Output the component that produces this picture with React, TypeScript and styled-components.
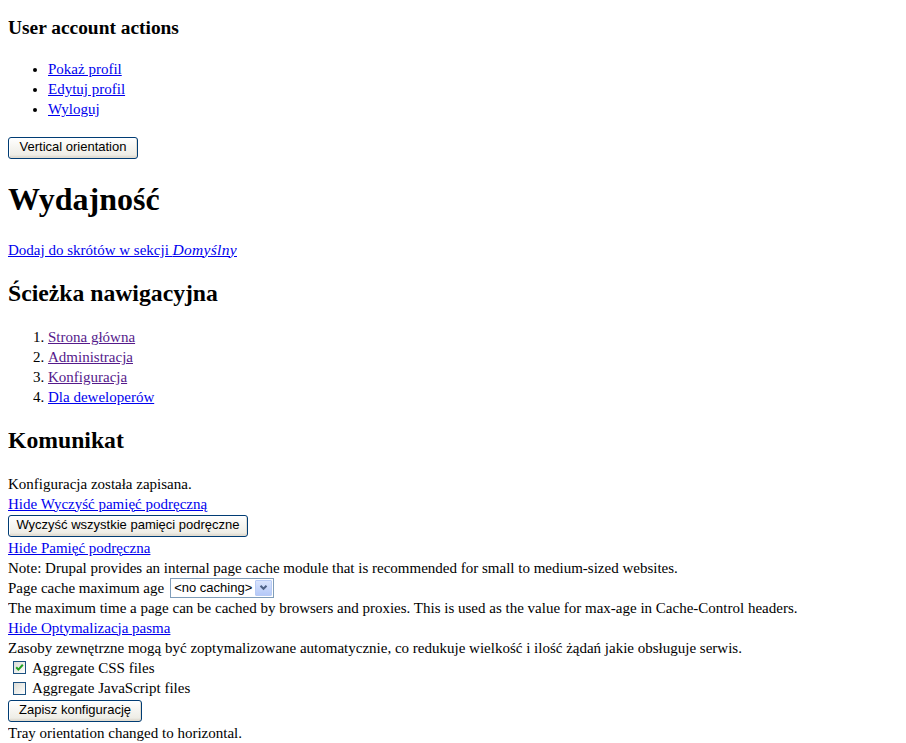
import React from "react";
import styled, { createGlobalStyle } from "styled-components";

const GlobalStyle = createGlobalStyle`
  html, body {
    background: #ffffff;
  }
  body {
    margin: 8px;
    font-family: "Liberation Serif", "Times New Roman", serif;
    font-size: 15px;
    color: #000000;
  }
`;

const H3 = styled.h3`
  font-size: 19.4px;
  font-weight: bold;
  margin: 8.72px 0 20.72px;
  line-height: 21.5px;
`;

const H1 = styled.h1`
  font-size: 32px;
  font-weight: bold;
  margin: 22.44px 0 21.44px;
  line-height: 36.8px;
`;

const H2 = styled.h2<{ $after?: number }>`
  font-size: 23.7px;
  font-weight: bold;
  margin: 19.92px 0 ${(p) => p.$after ?? 19.92}px;
  line-height: 27.6px;
`;

const BulletList = styled.ul`
  margin: 16px 0;
  padding-left: 40px;
  list-style: disc;
  line-height: 20px;
`;

const NumberList = styled.ol`
  margin: 16px 0;
  padding-left: 40px;
  line-height: 20px;
`;

const Link = styled.a<{ $visited?: boolean }>`
  color: ${(p) => (p.$visited ? "#551a8b" : "#0000ee")};
  text-decoration: underline;
  cursor: pointer;
`;

const Emph = styled.em`
  font-size: 15.5px;
  letter-spacing: 0.3px;
`;

const Paragraph = styled.p`
  margin: 16px 0;
  line-height: 20px;
`;

const ButtonRow = styled.div<{ $top?: number; $bottom?: number }>`
  display: flex;
  margin-top: ${(p) => p.$top ?? 0}px;
  margin-bottom: ${(p) => p.$bottom ?? 0}px;
`;

const XPButton = styled.button<{ $width: number }>`
  box-sizing: border-box;
  width: ${(p) => p.$width}px;
  height: 22px;
  padding: 0 0 1px;
  border: 1px solid #003c74;
  border-radius: 3px;
  background: linear-gradient(#ffffff 0%, #f6f5f1 45%, #eeede6 85%, #d6d0c5 100%);
  box-shadow: inset -1px -1px 0 #e3ddd0, inset 1px 1px 0 #ffffff;
  font-family: "Liberation Sans", Arial, sans-serif;
  font-size: 13px;
  color: #000000;
  line-height: 18px;
  text-align: center;
  white-space: nowrap;
`;

const Messages = styled.div`
  line-height: 20px;
`;

const Line = styled.div`
  line-height: 20px;
`;

const FieldRow = styled.div`
  display: flex;
  align-items: center;
  height: 20px;
  gap: 6px;
`;

const FakeSelect = styled.div`
  box-sizing: border-box;
  display: flex;
  align-items: stretch;
  width: 104px;
  height: 20px;
  border: 1px solid #7f9db9;
  background: #ffffff;
  font-family: "Liberation Sans", Arial, sans-serif;
  font-size: 13px;
  line-height: 18px;
`;

const SelectValue = styled.span`
  flex: 1;
  padding-left: 3px;
  white-space: nowrap;
`;

const SelectArrow = styled.span`
  box-sizing: border-box;
  width: 17px;
  margin: 1px;
  border: 1px solid #b8cbf5;
  border-radius: 1px;
  background: linear-gradient(#d8e4fd, #b5c9f8);
  display: flex;
  align-items: center;
  justify-content: center;
`;

const CheckRow = styled.label`
  display: flex;
  align-items: center;
  height: 20.5px;
  padding-left: 5px;
  gap: 6px;
`;

const CheckBox = styled.span`
  box-sizing: border-box;
  width: 13px;
  height: 13px;
  border: 1px solid #1c5180;
  background: linear-gradient(135deg, #dcdcd7 0%, #f0f0ec 60%, #ffffff 100%);
  display: flex;
  align-items: center;
  justify-content: center;
`;

const Check = () => (
  <svg width="9" height="9" viewBox="0 0 9 9">
    <path d="M1.2 4.2 L3.4 6.6 L7.8 1.8" fill="none" stroke="#21a121" strokeWidth="2" />
  </svg>
);

const Chevron = () => (
  <svg width="9" height="7" viewBox="0 0 9 7">
    <path d="M1.5 1.8 L4.5 4.8 L7.5 1.8" fill="none" stroke="#4d6185" strokeWidth="2" />
  </svg>
);

export default function App() {
  return (
    <>
      <GlobalStyle />
      <H3>User account actions</H3>
      <BulletList>
        <li><Link>Pokaż profil</Link></li>
        <li><Link>Edytuj profil</Link></li>
        <li><Link>Wyloguj</Link></li>
      </BulletList>
      <ButtonRow $top={18}>
        <XPButton $width={130}>Vertical orientation</XPButton>
      </ButtonRow>
      <H1>Wydajność</H1>
      <Paragraph>
        <Link>
          Dodaj do skrótów w sekcji <Emph>Domyślny</Emph>
        </Link>
      </Paragraph>
      <H2>Ścieżka nawigacyjna</H2>
      <NumberList>
        <li><Link $visited>Strona główna</Link></li>
        <li><Link $visited>Administracja</Link></li>
        <li><Link $visited>Konfiguracja</Link></li>
        <li><Link>Dla deweloperów</Link></li>
      </NumberList>
      <H2 $after={19}>Komunikat</H2>
      <Messages>
        <Line>Konfiguracja została zapisana.</Line>
        <Line><Link>Hide Wyczyść pamięć podręczną</Link></Line>
        <ButtonRow $top={1} $bottom={1}>
          <XPButton $width={240}>Wyczyść wszystkie pamięci podręczne</XPButton>
        </ButtonRow>
        <Line><Link>Hide Pamięć podręczna</Link></Line>
        <Line>Note: Drupal provides an internal page cache module that is recommended for small to medium-sized websites.</Line>
        <FieldRow>
          <span>Page cache maximum age</span>
          <FakeSelect>
            <SelectValue>&lt;no caching&gt;</SelectValue>
            <SelectArrow><Chevron /></SelectArrow>
          </FakeSelect>
        </FieldRow>
        <Line>The maximum time a page can be cached by browsers and proxies. This is used as the value for max-age in Cache-Control headers.</Line>
        <Line><Link>Hide Optymalizacja pasma</Link></Line>
        <Line>Zasoby zewnętrzne mogą być zoptymalizowane automatycznie, co redukuje wielkość i ilość żądań jakie obsługuje serwis.</Line>
        <CheckRow>
          <CheckBox><Check /></CheckBox>
          <span>Aggregate CSS files</span>
        </CheckRow>
        <CheckRow>
          <CheckBox />
          <span>Aggregate JavaScript files</span>
        </CheckRow>
        <ButtonRow $top={1} $bottom={1}>
          <XPButton $width={134}>Zapisz konfigurację</XPButton>
        </ButtonRow>
        <Line>Tray orientation changed to horizontal.</Line>
      </Messages>
    </>
  );
}
